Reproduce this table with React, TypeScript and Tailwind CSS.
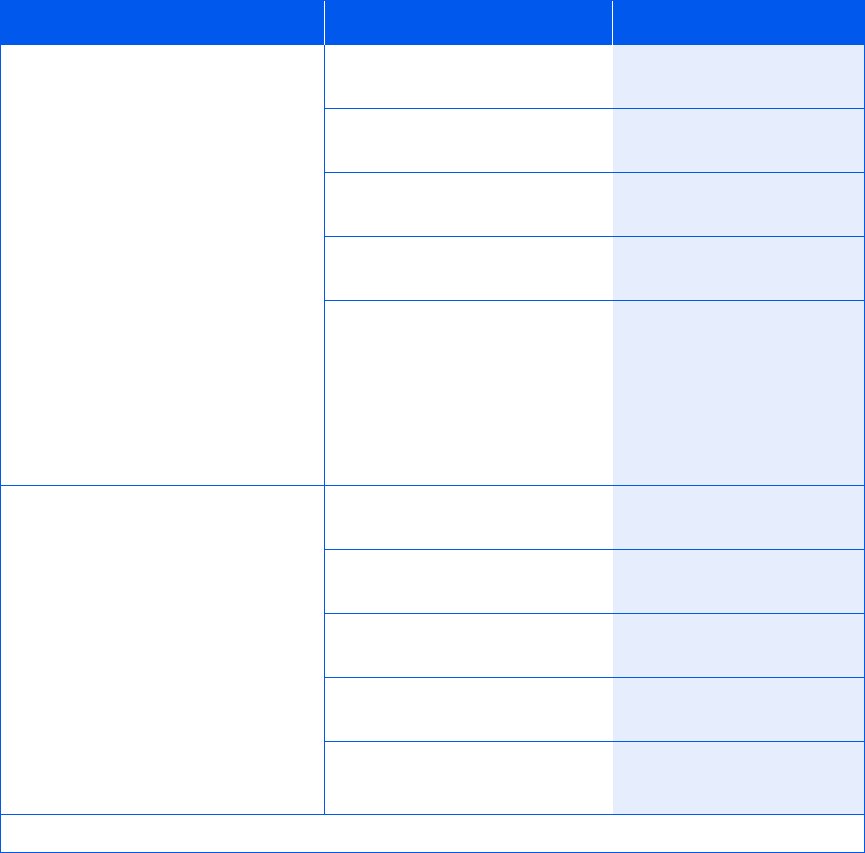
import React from 'react';

const groups = [
    { rows: [64, 64, 64, 64, 185] },
    { rows: [64, 64, 64, 64, 73] },
];

const rowHeights: Record<number, string> = {
    64: 'h-[64px]',
    185: 'h-[185px]',
    73: 'h-[73px]',
};

const App: React.FC = () => {
    return (
        <div className="w-[865px] bg-white font-['Liberation_Sans',sans-serif]">
            <div className="border border-[#0058ec]">
                {/* header */}
                <div className="flex h-[44px] bg-[#0058ec] text-white text-sm font-bold">
                    <div className="w-[324px] border-r border-white"></div>
                    <div className="w-[288px] border-r border-white"></div>
                    <div className="w-[251px]"></div>
                </div>

                {groups.map((g, gi) => (
                    <div key={gi} className="flex border-b border-[#0058ec]">
                        <div className="w-[324px] border-r border-[#0058ec] bg-white"></div>
                        <div className="flex flex-col w-[539px]">
                            {g.rows.map((h, ri) => {
                                const last = ri === g.rows.length - 1;
                                const height = last ? h - 1 : h;
                                return (
                                    <div
                                        key={ri}
                                        className={`flex ${last ? '' : 'border-b border-[#0058ec]'} ${
                                            last ? (height === 184 ? 'h-[184px]' : 'h-[72px]') : rowHeights[64]
                                        }`}
                                    >
                                        <div className="w-[288px] bg-white"></div>
                                        <div className="flex-1 bg-[#e6edfc]"></div>
                                    </div>
                                );
                            })}
                        </div>
                    </div>
                ))}

                {/* footer */}
                <div className="h-[37px] bg-white"></div>
            </div>
        </div>
    );
};

export default App;
